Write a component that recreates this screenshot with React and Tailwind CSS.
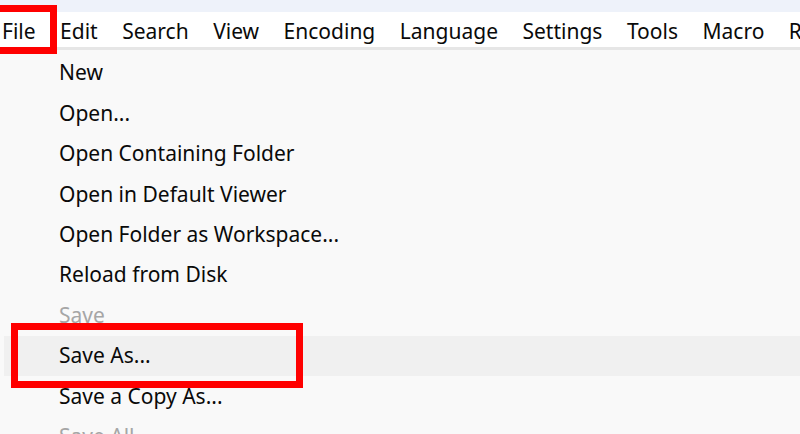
import React from 'react';

const menuBar = ['File', 'Edit', 'Search', 'View', 'Encoding', 'Language', 'Settings', 'Tools', 'Macro', 'Run'];

const items = [
  { label: 'New' },
  { label: 'Open...' },
  { label: 'Open Containing Folder' },
  { label: 'Open in Default Viewer' },
  { label: 'Open Folder as Workspace...' },
  { label: 'Reload from Disk' },
  { label: 'Save', disabled: true },
  { label: 'Save As...', active: true },
  { label: 'Save a Copy As...' },
  { label: 'Save All', disabled: true },
];

const App = () => {
  return (
    <div className="relative w-[800px] h-[434px] overflow-hidden bg-[#f9f9f9] text-[#0a0a0a] font-['Noto_Sans',sans-serif]">
      {/* title strip */}
      <div className="h-[12px] bg-[#eef2fa]" />

      {/* menu bar */}
      <div className="h-[35px] bg-white flex items-center pl-[2px] pt-[5px] gap-[24.5px] text-[21px] whitespace-nowrap">
        {menuBar.map((m) => (
          <span key={m}>{m}</span>
        ))}
      </div>
      <div className="h-[3px] bg-[#e6e6e6]" />

      {/* file menu */}
      <div className="ml-[4px] pt-[3px] text-[21px]">
        {items.map((it) => (
          <div
            key={it.label}
            className={`h-[40.4px] flex items-center pl-[55px] whitespace-nowrap ${it.active ? 'bg-[#f0f0f0]' : ''} ${it.disabled ? 'text-[#a6a6a6]' : ''}`}
          >
            {it.label}
          </div>
        ))}
      </div>

      {/* annotation boxes */}
      <div className="absolute left-[-10px] top-[5px] w-[67px] h-[49px] border-[7px] border-[#ff0000]" />
      <div className="absolute left-[11px] top-[323px] w-[292px] h-[65px] border-[7px] border-[#ff0000]" />
    </div>
  );
};

export default App;
